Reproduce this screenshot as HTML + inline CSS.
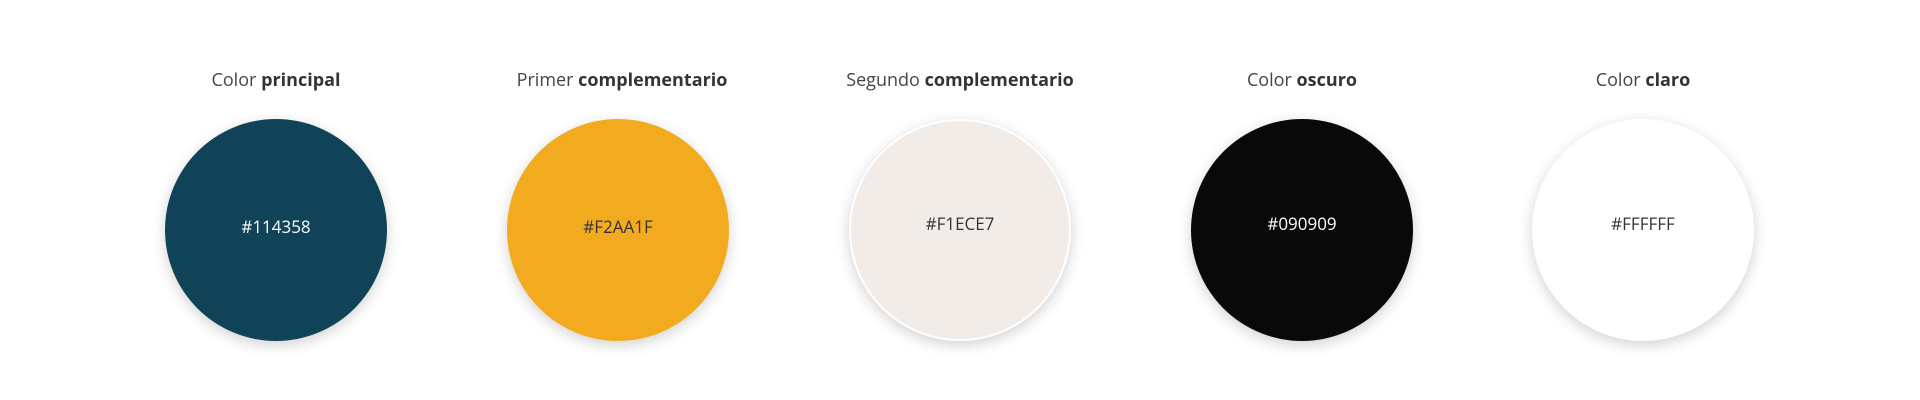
<!DOCTYPE html>
<html><head><meta charset="utf-8"><style>
body{margin:0;width:1920px;height:400px;background:#fff;position:relative;overflow:hidden;font-family:"Open Sans","Liberation Sans",sans-serif;}
.lab{position:absolute;top:68px;width:400px;text-align:center;font-size:18px;color:#444;}
.lab b{color:#333;}
.c{position:absolute;top:119px;width:222px;height:222px;border-radius:50%;box-shadow:0 4px 14px rgba(0,0,0,0.18);display:flex;align-items:center;justify-content:center;font-size:17px;box-sizing:border-box;}
.c span{position:relative;top:-4px}
.c.u span{top:-7px}
</style></head><body>
<div class="lab" style="left:76px">Color <b>principal</b></div>
<div class="lab" style="left:422px">Primer <b>complementario</b></div>
<div class="lab" style="left:760px">Segundo <b>complementario</b></div>
<div class="lab" style="left:1102px">Color <b>oscuro</b></div>
<div class="lab" style="left:1443px">Color <b>claro</b></div>
<div class="c" style="left:165px;background:#114358;color:#fff"><span>#114358</span></div>
<div class="c" style="left:507px;background:#F2AA1F;color:#333"><span>#F2AA1F</span></div>
<div class="c u" style="left:849px;background:#F1ECE7;color:#333;border:2px solid #fff"><span>#F1ECE7</span></div>
<div class="c u" style="left:1191px;background:#090909;color:#fff"><span>#090909</span></div>
<div class="c u" style="left:1532px;background:#fff;color:#333"><span>#FFFFFF</span></div>
</body></html>
